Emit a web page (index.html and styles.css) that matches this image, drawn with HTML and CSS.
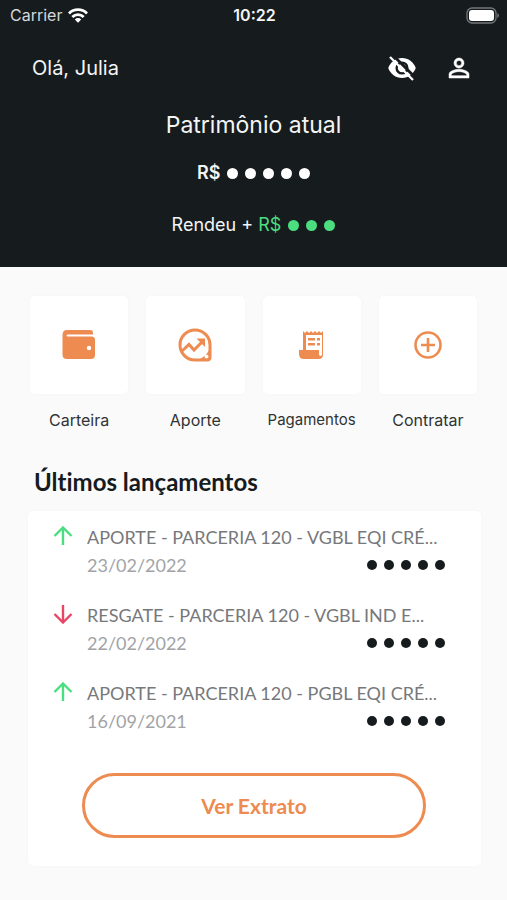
FILE: index.html
```html
<!DOCTYPE html>
<html lang="pt-BR">
<head>
    <meta charset="UTF-8">
    <meta name="viewport" content="width=device-width, initial-scale=1.0">
    <title>Patrimônio atual</title>
    <link rel="stylesheet" href="styles.css">
</head>
<body>
    <header class="header">
        <div class="status-bar">
            <div class="carrier">
                <span>Carrier</span>
                <svg width="20" height="15" viewBox="0 0 20 15" fill="none" stroke="#fff" stroke-width="2.8">
                    <path d="M1 5.4a12.8 12.8 0 0 1 18 0"/>
                    <path d="M4.3 9a8.1 8.1 0 0 1 11.4 0"/>
                    <path d="M10 14.8 6.8 11.4a4.6 4.6 0 0 1 6.4 0z" fill="#fff" stroke="none"/>
                </svg>
            </div>
            <span class="clock">10:22</span>
            <svg class="battery" width="33" height="17" viewBox="0 0 33 17">
                <rect x="1" y="1" width="29" height="15" rx="5" fill="none" stroke="#74787a" stroke-width="1.3"/>
                <rect x="3" y="3" width="25" height="11" rx="3" fill="#fff"/>
                <path d="M31.3 6v5a2.7 2.7 0 0 0 0-5z" fill="#74787a"/>
            </svg>
        </div>

        <div class="greeting">
            <span>Olá, Julia</span>
            <div class="actions">
                <button type="button" class="icon-btn" aria-label="Mostrar valores">
                    <svg width="30" height="30" viewBox="0 0 24 24">
                        <path fill="#fff" d="M12 4C7 4 2.700 7.200 1 12c1.700 4.800 6 8 11 8s9.300-3.200 11-8c-1.700-4.800-6-8-11-8z"/>
                        <circle cx="12" cy="12" r="4.300" fill="none" stroke="#161b1e" stroke-width="1.900"/>
                        <path d="M4.800 1.800 23 20" stroke="#161b1e" stroke-width="2.200"/>
                        <path d="M2.400 3.200 20.800 21.600" stroke="#fff" stroke-width="1.900"/>
                    </svg>
                </button>
                <button type="button" class="icon-btn" aria-label="Perfil">
                    <svg width="30" height="30" viewBox="0 0 24 24" fill="#fff" stroke="#fff" stroke-width=".4">
                        <path d="M12 5.900a2.100 2.100 0 1 1 0 4.200 2.100 2.100 0 0 1 0-4.200m0 9c2.970 0 6.100 1.460 6.100 2.100v1.100H5.900V17c0-.64 3.130-2.100 6.100-2.100M12 4C9.790 4 8 5.790 8 8s1.790 4 4 4 4-1.790 4-4-1.790-4-4-4zm0 9c-2.670 0-8 1.340-8 4v3h16v-3c0-2.660-5.330-4-8-4z"/>
                    </svg>
                </button>
            </div>
        </div>

        <div class="balance">
            <h1>Patrimônio atual</h1>
            <p class="total">R$ <span class="dots"><i></i><i></i><i></i><i></i><i></i></span></p>
            <p class="income">Rendeu + <span class="gain">R$ <span class="dots"><i></i><i></i><i></i></span></span></p>
        </div>
    </header>

    <main>
        <nav class="shortcuts">
            <a href="#carteira" class="shortcut">
                <span class="tile">
                    <svg width="34" height="30" viewBox="0 0 34 30" fill="#ed8b50">
                        <path d="M5 0h23q3 0 3 3v1.500H6q-1.500 0-1.500 1T6 6.500h23.500q3.500 0 3.500 3.500v15q0 4-4 4H5q-4.500 0-4.500-4.500V5Q.5 0 5 0z"/>
                        <circle cx="27" cy="18" r="2.200" fill="#fff"/>
                    </svg>
                </span>
                <span>Carteira</span>
            </a>
            <a href="#aporte" class="shortcut">
                <span class="tile">
                    <svg width="34" height="34" viewBox="0 0 34 34" fill="none" stroke="#ed8b50" stroke-width="3">
                        <path d="M17 2a15 15 0 1 0 0 30h12q3 0 3-3V17A15 15 0 0 0 17 2z"/>
                        <path d="m4 23 7-6.500 5 5.500 9-9"/>
                        <path d="M18.500 10.500h8.500v8.500z" fill="#ed8b50" stroke="none"/>
                        <path d="M32 20q-3 8-12 12h12z" fill="#ed8b50" stroke="none"/>
                        <circle cx="28.500" cy="28.500" r="2" fill="#fff" stroke="none"/>
                    </svg>
                </span>
                <span>Aporte</span>
            </a>
            <a href="#pagamentos" class="shortcut">
                <span class="tile">
                    <svg width="26" height="28" viewBox="0 0 26 28" fill="#ed8b50">
                        <path d="M4 0l2 2 2-2 2 2 2-2 2 2 2-2 2 2 2-2 2 2 2-2v23.500q0 4.500-4.500 4.500H5q-5 0-5-5v-4h4zM7 4v15h13v4q0 2 1.500 2t1.500-2V4z"/>
                        <path d="M9 7h7v2.500H9zM18 7h3v2.500h-3zM9 12h7v2.500H9zM18 12h3v2.500h-3z"/>
                    </svg>
                </span>
                <span class="small">Pagamentos</span>
            </a>
            <a href="#contratar" class="shortcut">
                <span class="tile">
                    <svg width="28" height="28" viewBox="0 0 28 28" fill="none" stroke="#ed8b50" stroke-width="2.600">
                        <circle cx="14" cy="14" r="12.500"/>
                        <path d="M14 7v14M7 14h14"/>
                    </svg>
                </span>
                <span>Contratar</span>
            </a>
        </nav>

        <section>
            <h2>Últimos lançamentos</h2>
            <div class="card">
                <ul class="entries">
                    <li class="entry">
                        <svg class="arrow up" width="20" height="20" viewBox="0 0 20 20"><path d="M10 19V2M1.500 10 10 1.500l8.500 8.500"/></svg>
                        <div class="details">
                            <span class="name">APORTE - PARCERIA 120 - VGBL EQI CRÉ...</span>
                            <div class="line">
                                <span class="date">23/02/2022</span>
                                <span class="dots"><i></i><i></i><i></i><i></i><i></i></span>
                            </div>
                        </div>
                    </li>
                    <li class="entry">
                        <svg class="arrow down" width="20" height="20" viewBox="0 0 20 20"><path d="M10 1v17M1.500 10l8.500 8.500 8.500-8.500"/></svg>
                        <div class="details">
                            <span class="name">RESGATE - PARCERIA 120 - VGBL IND E...</span>
                            <div class="line">
                                <span class="date">22/02/2022</span>
                                <span class="dots"><i></i><i></i><i></i><i></i><i></i></span>
                            </div>
                        </div>
                    </li>
                    <li class="entry">
                        <svg class="arrow up" width="20" height="20" viewBox="0 0 20 20"><path d="M10 19V2M1.500 10 10 1.500l8.500 8.500"/></svg>
                        <div class="details">
                            <span class="name">APORTE - PARCERIA 120 - PGBL EQI CRÉ...</span>
                            <div class="line">
                                <span class="date">16/09/2021</span>
                                <span class="dots"><i></i><i></i><i></i><i></i><i></i></span>
                            </div>
                        </div>
                    </li>
                </ul>
                <button type="button" class="statement-btn">Ver Extrato</button>
            </div>
        </section>
    </main>
</body>
</html>
```
FILE: styles.css
```css
* {
    box-sizing: border-box;
}

body {
    margin: 0;
    font-family: Inter, "Liberation Sans", sans-serif;
    background-color: #fafafa;
    color: #161b1e;
}

h1,
h2,
p,
ul {
    margin: 0;
    padding: 0;
}

.header {
    background-color: #161b1e;
    color: #f4f5f5;
    padding-bottom: 28px;
}

.status-bar {
    display: grid;
    grid-template-columns: 1fr auto 1fr;
    align-items: center;
    height: 30px;
    padding: 0 8px 0 10px;
    font-size: 16px;
}

.carrier {
    display: flex;
    align-items: center;
    gap: 6px;
    color: #d5d7d8;
}

.clock {
    font-weight: 600;
}

.battery {
    justify-self: end;
}

.greeting {
    display: flex;
    justify-content: space-between;
    align-items: center;
    height: 75px;
    padding: 0 33px 0 32px;
    font-size: 20px;
}

.actions {
    display: flex;
    gap: 27px;
}

.icon-btn {
    display: flex;
    padding: 0;
    border: none;
    background: none;
    cursor: pointer;
}

.balance {
    display: flex;
    flex-direction: column;
    align-items: center;
}

.balance h1 {
    font-size: 23px;
    font-weight: 400;
    line-height: 40px;
}

.total {
    font-size: 18px;
    font-weight: 600;
    line-height: 28px;
    margin-top: 14px;
}

.income {
    font-size: 18px;
    line-height: 28px;
    margin-top: 24px;
}

.gain {
    color: #4ade80;
}

.dots {
    display: inline-flex;
    gap: 7px;
}

.balance .dots {
    margin-left: 2px;
}

.dots i {
    width: 11px;
    height: 11px;
    border-radius: 50%;
    background-color: currentColor;
}

.total .dots {
    color: #fff;
}

.shortcuts {
    display: grid;
    grid-template-columns: repeat(4, 1fr);
    gap: 18px;
    padding: 29px 30px 0;
}

.shortcut {
    display: flex;
    flex-direction: column;
    align-items: center;
    gap: 16px;
    color: #303335;
    font-size: 16px;
    line-height: 20px;
    text-decoration: none;
}

.tile {
    display: flex;
    justify-content: center;
    align-items: center;
    width: 100%;
    height: 98px;
    border-radius: 5px;
    background-color: #fff;
    box-shadow: 0 0 3px rgba(0, 0, 0, 0.03);
}

.small {
    font-size: 15px;
}

h2 {
    margin: 37px 34px 14px;
    font-family: Lato, sans-serif;
    font-size: 24px;
    font-weight: 700;
    font-variant-ligatures: none;
    line-height: 30px;
}

.card {
    margin: 0 26px 34px 28px;
    padding: 12px 36px 28px 25px;
    border-radius: 5px;
    background-color: #fff;
    box-shadow: 0 0 3px rgba(0, 0, 0, 0.03);
    font-family: Lato, sans-serif;
}

.entries {
    list-style: none;
}

.entry {
    display: flex;
    gap: 14px;
    height: 78px;
}

.arrow {
    flex: none;
    margin-top: 3px;
    fill: none;
    stroke-width: 2.4;
}

.up {
    stroke: #4ade80;
}

.down {
    stroke: #e94565;
}

.details {
    flex: 1;
    min-width: 0;
}

.name {
    display: block;
    overflow: hidden;
    color: #77787b;
    font-size: 18px;
    line-height: 28px;
    white-space: nowrap;
}

.line {
    display: flex;
    justify-content: space-between;
    align-items: center;
    line-height: 28px;
}

.date {
    color: #a2a3a6;
    font-size: 18px;
}

.line .dots i {
    width: 10px;
    height: 10px;
}

.statement-btn {
    display: block;
    width: calc(100% - 48px);
    height: 65px;
    margin: 16px 0 0 29px;
    border: 3px solid #ed8b50;
    border-radius: 33px;
    background: none;
    color: #ed8b50;
    font-family: Lato, sans-serif;
    font-size: 21px;
    font-weight: 700;
    cursor: pointer;
}
```
